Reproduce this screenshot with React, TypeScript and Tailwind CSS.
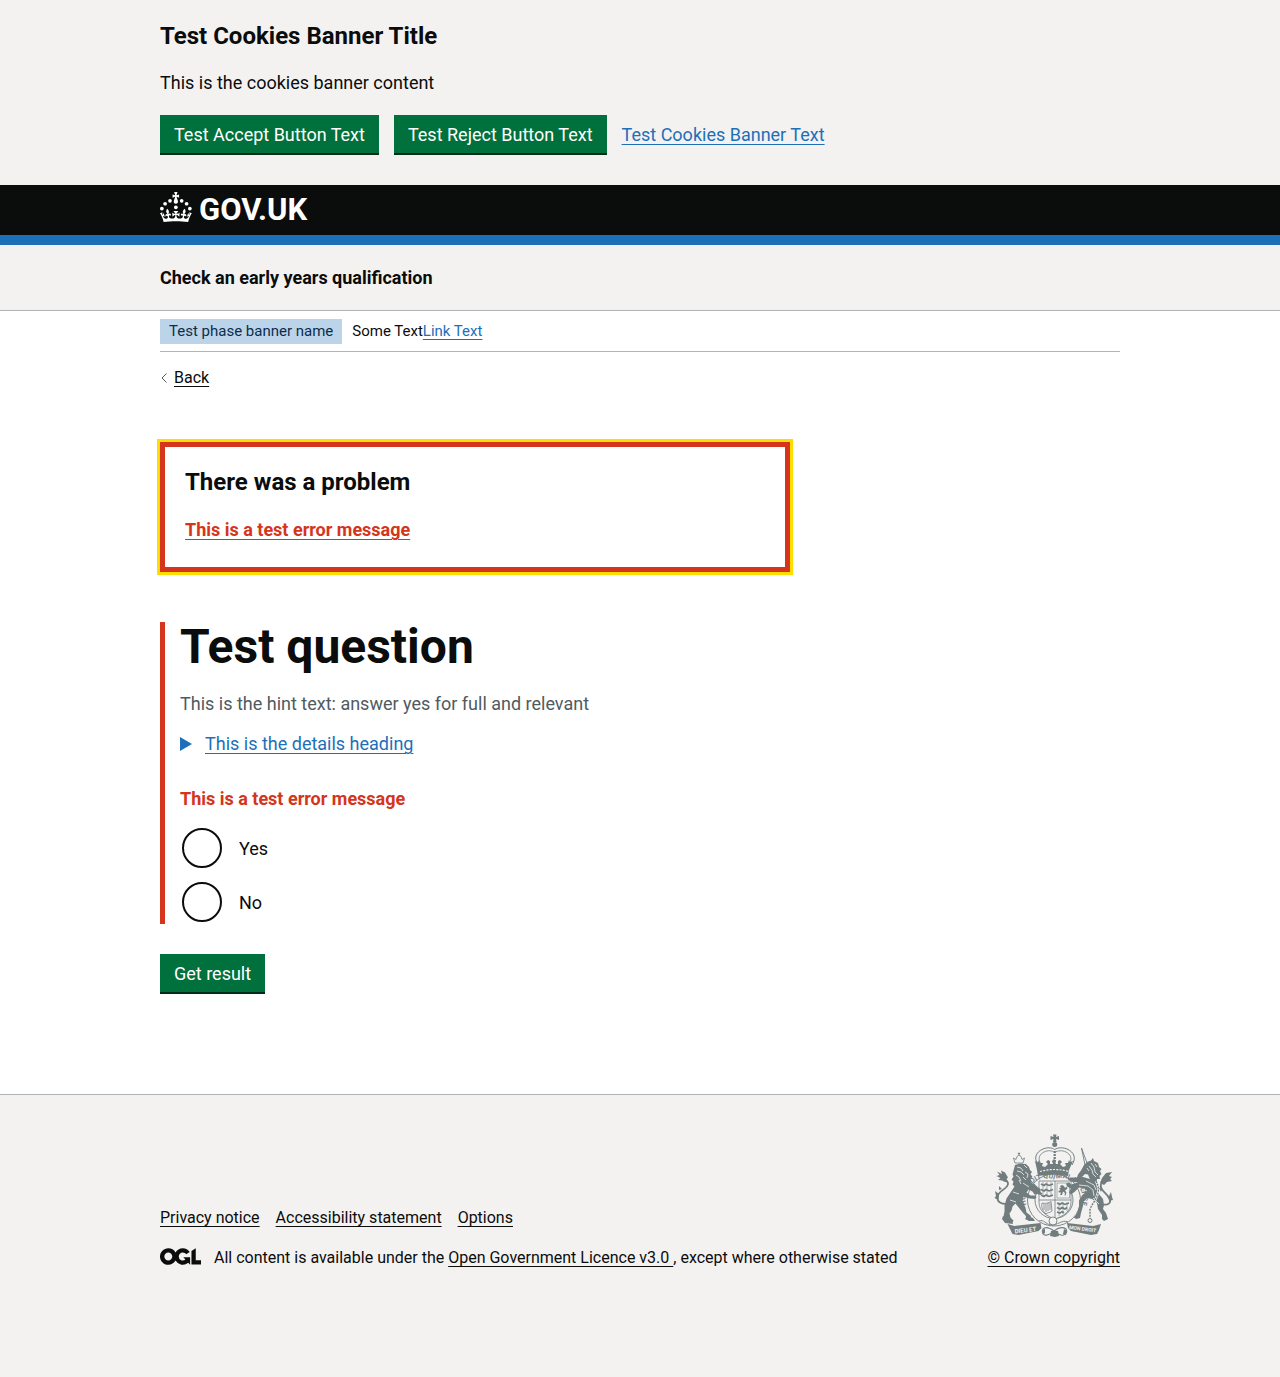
import type { ReactNode } from "react";

const container = "mx-auto w-full max-w-[960px]";
const linkLine = "underline decoration-1 underline-offset-[3px]";

function GreenButton({ children }: { children: ReactNode }) {
  return (
    <button
      type="button"
      className="mb-0.5 cursor-pointer bg-[#00703c] px-3.5 pt-[7px] pb-1.5 text-center text-lg leading-[25px] text-white shadow-[0_2px_0_#002d18]"
    >
      {children}
    </button>
  );
}

function CrownIcon() {
  return (
    <svg viewBox="0 0 64 60" className="h-[30px] w-8" fill="currentColor" aria-hidden="true">
      <circle cx="20" cy="17.6" r="3.7" />
      <circle cx="10.2" cy="23.5" r="3.7" />
      <circle cx="3.7" cy="33.2" r="3.7" />
      <circle cx="31.7" cy="30.6" r="3.7" />
      <circle cx="43.3" cy="17.6" r="3.7" />
      <circle cx="53.2" cy="23.5" r="3.7" />
      <circle cx="59.7" cy="33.2" r="3.7" />
      <path d="M33.1,9.8c.2-.1.3-.3.5-.5l4.6,2.4v-6.8l-4.6,1.5c-.1-.2-.3-.3-.5-.5l1.9-5.9h-6.7l1.9,5.9c-.2.1-.3.3-.5.5l-4.6-1.5v6.8l4.6-2.4c.1.2.3.3.5.5l-2.6,8c-.9,2.8,1.2,5.7,4.1,5.7h0c3,0,5.1-2.9,4.1-5.7l-2.6-8ZM37,37.9s-3.4,3.8-4.1,6.1c2.2,0,4.2-.5,6.4-2.8l-.7,8.5c-2-2.8-4.4-4.1-5.7-3.8.1,3.1.5,6.7,5.8,7.2,3.7.3,6.7-1.5,7-3.8.4-2.6-2-4.3-3.7-1.6-1.4-4.5,2.4-6.1,4.9-3.2-1.9-4.5-1.8-7.7,2.4-10.9,3,4,2.6,7.3-1.2,11.1,2.4-1.3,6.2,0,4,4.6-1.2-2.8-3.7-2.2-4.2.2-.3,1.7.7,3.7,3,4.2,1.9.3,4.7-.9,7-5.9-1.3,0-2.4.7-3.9,1.7l2.4-8c.6,2.3,1.4,3.7,2.2,4.5.6-1.6.5-2.8,0-5.3l5,1.8c-2.6,3.6-5.2,8.7-7.3,17.5-7.4-1.1-15.7-1.7-24.5-1.7h0c-8.8,0-17.1.6-24.5,1.7-2.1-8.9-4.7-13.9-7.3-17.5l5-1.8c-.5,2.5-.6,3.7,0,5.3.8-.8,1.6-2.3,2.2-4.5l2.4,8c-1.5-1-2.6-1.7-3.9-1.7,2.3,5,5.2,6.2,7,5.9,2.3-.4,3.3-2.4,3-4.2-.5-2.4-3-3.1-4.2-.2-2.2-4.6,1.6-6,4-4.6-3.7-3.7-4.2-7.1-1.2-11.1,4.2,3.2,4.3,6.4,2.4,10.9,2.5-2.8,6.3-1.3,4.9,3.2-1.8-2.7-4.1-1-3.7,1.6.3,2.3,3.3,4.1,7,3.8,5.4-.5,5.7-4.2,5.8-7.2-1.3-.2-3.7,1-5.7,3.8l-.7-8.5c2.2,2.3,4.2,2.7,6.4,2.8-.7-2.3-4.1-6.1-4.1-6.1h10.6Z" />
    </svg>
  );
}

function OglLogo() {
  return (
    <svg viewBox="0 0 483.2 195.7" className="h-[17px] w-[41px] shrink-0" fill="currentColor" aria-hidden="true">
      <path d="M421.5 142.8V.1l-50.7 32.3v161.1h112.4v-50.7zm-122.3-9.6A47.12 47.12 0 0 1 221 97.8c0-26 21.1-47.1 47.1-47.1 16.7 0 31.4 8.7 39.7 21.8l42.7-27.2A97.63 97.63 0 0 0 268.1 0c-36.5 0-68.3 20.1-85.1 49.7A98 98 0 0 0 97.8 0C43.9 0 0 43.9 0 97.8s43.9 97.8 97.8 97.8c36.5 0 68.3-20.1 85.1-49.7a97.76 97.76 0 0 0 149.6 25.4l19.4 22.2h3v-87.8h-80l24.3 27.5zM97.8 145c-26 0-47.1-21.1-47.1-47.1s21.1-47.1 47.1-47.1 47.1 21.1 47.1 47.1S123.8 145 97.8 145" />
    </svg>
  );
}

function RoyalArms() {
  const ink = "#707c7e";
  const paper = "#f3f2f1";
  return (
    <svg viewBox="0 0 122 108" className="h-[108px] w-[122px]" fill={ink} stroke="none" aria-hidden="true">
      {/* garter */}
      <ellipse cx="61" cy="68" rx="26.5" ry="26" fill={paper} stroke={ink} strokeWidth="0.9" />
      <ellipse cx="61" cy="68" rx="19" ry="18.5" fill={paper} stroke={ink} strokeWidth="0.9" />
      <path id="motto" d="M46 86A20.500 20 0 0 1 61 47.500A20.500 20 0 0 1 76 86" fill="none" />
      <text fontSize="7" fontWeight="700" fontFamily="Roboto, sans-serif" textAnchor="middle" className="opacity-99">
        <textPath href="#motto" startOffset="50%">HONI SOIT QUI MAL Y PENSE</textPath>
      </text>
      {/* shield */}
      <path d="M46 49H78V70C78 80 70 84 62 87C54 84 46 80 46 70Z" fill={paper} stroke={ink} strokeWidth="0.8" />
      <path d="M46 68H78M62 49V87" stroke={ink} strokeWidth="0.8" fill="none" />
      <g fill="none" stroke={ink} strokeWidth="1.6">
        <path d="M48 52l3 1.500 2-1.500 3 1.500 4-1.500M48 57.500l3 1.500 2-1.500 3 1.500 4-1.500M48 63l3 1.500 2-1.500 3 1.500 4-1.500" />
        <path d="M64 71l3 1.500 2-1.500 3 1.500 4-1.500M64 75.500l3 1.500 2-1.500 3 1.500 2-1.500M64 80l3 1.200 2-1.500 2 1" />
      </g>
      <g fill="none" stroke={ink} strokeWidth="0.8">
        <path d="M50 50v15M54 50v15M58 50v15M66 70v14M70 70v12M74 70v9" strokeWidth="0.6" />
        <rect x="64" y="51" width="12.5" height="15" opacity="0.7" />
        <path d="M49 71c3 1 7 0 9-1.500l1 9.500c-2 2-5 1.500-6 3M49 71c-1 5 1 8 4 11M51 72v6M53 72v8M55 71v8M57 71v7" />
      </g>
      <path d="M67 54l2-1 2 1 1 2 1.500-1.500 1 2-2.500 2 1.500 2-1 3h-1l.5-2.500-2-1.500-1 3.500h-2l1-2-1-1-1 1-.5-2 2-1-1.500-2 2-.5z" />
      {/* lion: crown, mane, body, legs */}
      <path d="M22 31l-1.500-5 2.500 1.500 1-3 2-1.500 2 1.500 1 3 2.500-1.500L30 31z" fill={paper} stroke={ink} strokeWidth="0.8" />
      <path d="M26 23.500v-3M24.800 21.500h2.400" stroke={ink} strokeWidth="0.9" />
      <path d="M22 33l5-1.500 6 .5 3 3 1 3 2 2-1.500 2 2 3-2 2 1 4 3 1 3 3 3 2 0 3 2 1.500-2 1.500-3-1-3 .5-2-3-4-2-2 3 4 3 5 0 1 2-2 1.500-5-.5-6-2-1 5 3 6 1 5 4 3 1 3-3 1.500-2-1.500-1-3-2-2-4-5-4-5-3 3-1 4-2 3 1 4 3 3-1 2-4 0-3-2-2-4 1-5 0-6 2-7 4-6 4-6-2-2 1-3-2-2 2-3-1-2z" />
      <path d="M24 35l4 1 2 3M31 33l3 3M24 39l4 1 3 3M23 43l3 2 2 4M32 40l3 2-1 4M30 45l3 3M26 48l2 4M30 51l6 4M20 60l6 2M17 68l6 2" fill="none" stroke={paper} strokeWidth="0.8" />
      <path d="M17 71C10 73 4 71 4.500 65C5 58 16 57 15 51C14 48 10 48 7.500 45" fill="none" stroke={ink} strokeWidth="1.800" />
      <path d="M4 39.500l5 2.500-1-3.500 4 2 3 5-1.500 1.500 2 3-3.500 0-3-1.500-4-.5 2.500-2-4-2 3-1zM6 62l-4-3 1 5-1.500 2 4 2zM9 57l-3-3 0 4z" />
      <path d="M10 84l-1 3 3 4 8 1-1-4zM34 84l-2 3 4 2 6 0-2-3z" />
      {/* unicorn: horn, head, body, legs */}
      <path d="M88.500 16L94 31L92 33z" fill={paper} stroke={ink} strokeWidth="0.9" />
      <path d="M91 33l3-3 4-1.500 2-2.500 1 3 4 2 1 4 2.500 2-1.500 2 1.500 3-2 2 .5 3-3 0 0 3-3-.5-4-2-2-5-3-.5-3 3-3 2-2-1.500 1-3 3-4z" />
      <path d="M98 31l3 4 1 5 3 3M96 34l3 4 1 4 3 3M94 36l2 3M102 32l2 3" fill="none" stroke={paper} strokeWidth="0.8" />
      <path d="M97 47l5 2 3 5 1 8 4 5 1 6-1 4 3 4 2 6-4 2-2-2 0-4-4-6-1-6-5-4-5-1-3 3-1 5-2 7-1 5-4 1-2-1.500 3-4 2-7 0-6 3-5 3-2 0-5-6-1-4 4-4 3-2-2 2-4-4-2-1-3 3-1 2 2 7-2-7-1-3-2 2-2 5 0 8-.5z" />
      <path d="M86 53l9 1 5 4 1 6M93 49l8 4 2 5M89 57l5 2M100 66l6 6" fill="none" stroke={paper} strokeWidth="0.8" />
      <path d="M103 49c3 6 3 10 1 15-2 6-6 9-7 14l0 8" fill="none" stroke={paper} strokeWidth="2.4" />
      <path d="M103 49c3 6 3 10 1 15-2 6-6 9-7 14l0 8" fill="none" stroke={ink} strokeWidth="1.4" strokeDasharray="2 1" />
      <circle cx="97" cy="88.500" r="2" fill="none" stroke={ink} />
      <path d="M108 72C115 74 119 71 116 66C113 60 106 58 108 52C110 49 114 48 117 46" fill="none" stroke={ink} strokeWidth="1.800" />
      <path d="M119 40l-6 1-4 5-2 5 4 2 3-3 5-1-2-2 2-2-3-1zM116 64l2-4 1 5 1 3-4 1zM109 57l-3-1 2 4z" />
      {/* imperial crown */}
      <path d="M60 2.500h3.500L63 5l3-1v4l-3-1 .5 3h-3.500l.5-3-3 1V4l3 1z" />
      <circle cx="61.700" cy="12.500" r="2.500" />
      <g fill="none" stroke={ink}>
        <path d="M45 33C40 25 44 20 49 17.500C54 15 59 15.500 61.700 17.500C65 15.500 70 15 75 17.500C80 20 84 25 79 33" strokeWidth="1" />
        <path d="M48 32C44 26 47 22 51 20C55 18 59 18.500 61.700 20.500C65 18.500 69 18 73 20C77 22 80 26 76 32" strokeWidth="0.8" />
        <path d="M61.700 19v13" strokeWidth="2.200" strokeDasharray="2 1" />
      </g>
      <path d="M42 29l3 1 1-2 1 3 3 0-1 3 3 1 3-3-2-2 2-2 2 1 0 3 3 0-1-3 2-2 2 2-1 3 3 0 0-3 2-1 2 2-2 2 3 3 3-1-1-3 3 0 1-3 1 2 3-1-4 9-1 6q-14-3-30 0l-1-6z" />
      <path d="M47 39.500q14-4 29 0" fill="none" stroke={paper} strokeWidth="1.200" strokeDasharray="2 1.300" />
      {/* buckle, compartment and scrolls */}
      <path d="M46 89c5-2 6 3 12 4s11-6 17-3" fill="none" stroke={ink} strokeWidth="0.9" />
      <circle cx="60" cy="89" r="4" fill={paper} stroke={ink} strokeWidth="0.9" />
      <path d="M50 97c3-3 7-1 11 2 4-3 8-5 12-2 2 3-1 7-5 6-3-1-5-2-7-2s-4 1-7 2c-4 1-6-3-4-6z" fill={paper} stroke={ink} strokeWidth="1.100" />
      <path d="M58 99l3-.5 4 .5 1 5-4 1-5-1zM49 98l3-1v4l-2 1zM71 97l3 2-1 4-3-1z" />
      <path d="M14.500 92l7 2 26-3 1 5-3 3-20 4-6-1-2-4z" />
      <path d="M74 91l26 3 8-2-2 6-2 4-6 1-20-4-3-3z" />
      <text x="22" y="101.500" fontSize="6" fontWeight="700" fontFamily="Roboto, sans-serif" fill={paper} transform="rotate(-7 22 101.500)">DIEU ET</text>
      <text x="76" y="97" fontSize="5" fontWeight="700" fontFamily="Roboto, sans-serif" fill={paper} transform="rotate(7 76 97)">MON DROIT</text>
    </svg>
  );
}

function RadioOption({ id, label }: { id: string; label: string }) {
  return (
    <div className="flex items-center gap-[15px]">
      <div className="grid size-11 place-items-center">
        <input
          type="radio"
          id={id}
          name="answer"
          value={id}
          className="size-10 cursor-pointer appearance-none rounded-full border-2 border-[#0b0c0c] bg-white checked:bg-[#0b0c0c] checked:shadow-[inset_0_0_0_8px_white]"
        />
      </div>
      <label htmlFor={id} className="cursor-pointer">{label}</label>
    </div>
  );
}

export default function App() {
  return (
    <div className="flex min-h-screen flex-col bg-white font-[Roboto,Arial,sans-serif] text-lg leading-[25px] text-[#0b0c0c]">
      <section aria-label="Cookies" className="bg-[#f3f2f1]">
        <div className={`${container} pt-[21px] pb-[30px]`}>
          <h2 className="mb-[19px] text-2xl leading-[30px] font-bold">Test Cookies Banner Title</h2>
          <p className="mb-5">This is the cookies banner content</p>
          <div className="flex items-baseline gap-[15px]">
            <GreenButton>Test Accept Button Text</GreenButton>
            <GreenButton>Test Reject Button Text</GreenButton>
            <a href="#cookies" className={`${linkLine} text-[#1d70b8]`}>Test Cookies Banner Text</a>
          </div>
        </div>
      </section>

      <header>
        <div className="border-b-10 border-[#1d70b8] bg-[#0b0c0c] text-white">
          <div className={`${container} flex h-[50px]`}>
            <a href="#home" className="flex items-start gap-[7px] pt-[7px]">
              <CrownIcon />
              <span className="text-[31px] leading-9 font-bold">GOV.UK</span>
            </a>
          </div>
        </div>
        <div className="border-b border-[#b1b4b6] bg-[#f3f2f1]">
          <div className={`${container} py-5`}>
            <a href="#service" className="font-bold">Check an early years qualification</a>
          </div>
        </div>
      </header>

      <div className={container}>
        <div className="flex items-center gap-2.5 border-b border-[#b1b4b6] pt-2 pb-[7px] text-[15px]">
          <strong className="bg-[#bbd4ea] px-[9px] font-normal text-[#0c2d4a]">Test phase banner name</strong>
          <span>
            Some Text
            <a href="#feedback" className={`${linkLine} text-[#1d70b8]`}>Link Text</a>
          </span>
        </div>
        <a href="#back" className="mt-4 flex w-fit items-center gap-1.5 text-base leading-5">
          <svg viewBox="0 0 8 10" className="h-2.5 w-2" fill="none" stroke="#505a5f" aria-hidden="true">
            <path d="M6.500 0.500L2 5l4.500 4.500" />
          </svg>
          <span className={linkLine}>Back</span>
        </a>
      </div>

      <main className={`${container} pt-[54px] pb-25`}>
        <div className="max-w-[630px]">
          <div role="alert" className="mb-[50px] border-5 border-[#d4351c] px-5 pt-5 pb-[25px] outline-3 outline-[#ffdd00]">
            <h2 className="mb-5 text-2xl leading-[30px] font-bold">There was a problem</h2>
            <a href="#yes" className={`${linkLine} block w-fit font-bold text-[#d4351c]`}>This is a test error message</a>
          </div>

          <form>
            <fieldset className="mb-[30px] border-l-5 border-[#d4351c] pl-[15px]">
              <h1 className="mb-[19px] text-5xl leading-[50px] font-bold">Test question</h1>
              <p className="mb-[15px] text-[#505a5f]">This is the hint text: answer yes for full and relevant</p>
              <details className="mb-[30px]">
                <summary className="flex w-fit cursor-pointer list-none items-center gap-[13px] text-[#1d70b8]">
                  <svg viewBox="0 0 12 14" className="h-3.5 w-3" fill="currentColor" aria-hidden="true">
                    <path d="M0 0L12 7L0 14Z" />
                  </svg>
                  <span className={linkLine}>This is the details heading</span>
                </summary>
              </details>
              <p className="mb-[15px] font-bold text-[#d4351c]">This is a test error message</p>
              <div className="flex flex-col gap-2.5">
                <RadioOption id="yes" label="Yes" />
                <RadioOption id="no" label="No" />
              </div>
            </fieldset>
            <GreenButton>Get result</GreenButton>
          </form>
        </div>
      </main>

      <footer className="grow border-t border-[#b1b4b6] bg-[#f3f2f1] text-base leading-5">
        <div className={`${container} flex items-end justify-between pt-[37px] pb-25`}>
          <div>
            <ul className="mb-5 flex gap-4">
              <li><a href="#privacy" className={linkLine}>Privacy notice</a></li>
              <li><a href="#accessibility" className={linkLine}>Accessibility statement</a></li>
              <li><a href="#options" className={linkLine}>Options</a></li>
            </ul>
            <div className="flex items-start gap-[13px]">
              <OglLogo />
              <span>
                All content is available under the{" "}
                <a href="#licence" className={linkLine}>Open Government Licence v3.0 </a>
                , except where otherwise stated
              </span>
            </div>
          </div>
          <a href="#copyright" className="flex flex-col items-center gap-2">
            <RoyalArms />
            <span className={linkLine}>© Crown copyright</span>
          </a>
        </div>
      </footer>
    </div>
  );
}
